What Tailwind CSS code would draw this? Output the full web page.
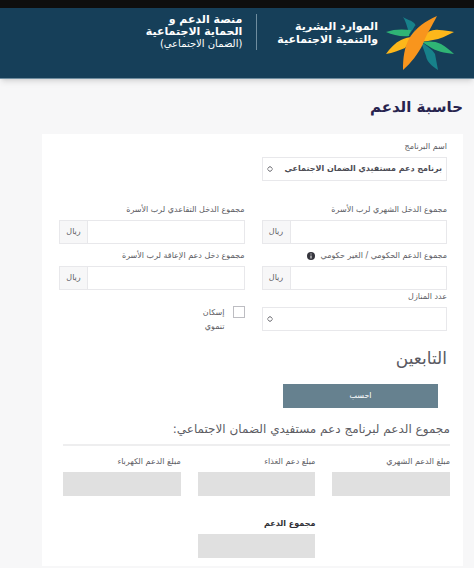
<!DOCTYPE html>
<html lang="ar" dir="rtl">
<head>
<meta charset="utf-8">
<meta name="viewport" content="width=device-width, initial-scale=1">
<title>حاسبة الدعم</title>
<script src="https://cdn.jsdelivr.net/npm/@tailwindcss/browser@4"></script>
</head>
<body class="min-h-screen bg-[#f7f7f8] font-['DejaVu_Sans',sans-serif] text-[8px] leading-3 text-[#5c5c63]">
<header class="border-t-8 border-[#0e0e0e] bg-[#163f59] text-white shadow-md">
  <div class="flex h-[71px] items-start border-b border-[#6f8d9f] pr-5">
    <svg class="mt-2 h-[54px] w-[68px] shrink-0" viewBox="0 0 68 54" aria-label="شعار الوزارة" role="img">
      <path d="M17 1C21 4 26 4 29 8C30 11 30 13 28 17L25 20C21 14 21 7 17 1Z" fill="#17818a"/>
      <path d="M35 26C41 30 46 33 49 38C50 43 51 49 52 54C46 50 41 46 40 40Z" fill="#17818a"/>
      <path d="M0 16C8 13 16 13 25 14L23 20C15 21 7 19 0 16Z" fill="#2fb475"/>
      <path d="M36 26C42 25 50 25 55 28C60 31 64 34 68 38C58 37 50 35 44 31Z" fill="#2fb475"/>
      <path d="M38 20C42 15 47 13 53 14C58 14 63 15 68 16C60 20 54 23 47 24C42 25 38 26 34 25Z" fill="#fdb71a"/>
      <path d="M0 38C4 32 9 27 15 24C19 22 23 21 27 21L19 32C13 34 7 37 0 38Z" fill="#fdb71a"/>
      <path d="M51 0C39 5 30 12 24 21C18 31 17 43 17 54C25 47 32 38 37 28C40 19 46 10 51 0Z" fill="#f8951d"/>
      <path d="M30 10Q28 14 24 19" fill="none" stroke="#163f59" stroke-width="2"/>
    </svg>
    <p class="mr-2 mt-3 text-[11px] leading-[13px] font-bold whitespace-nowrap">الموارد البشرية<br>والتنمية الاجتماعية</p>
    <p class="mt-1.5 mr-5 border-r border-[#6f8d9f] pr-3.5 text-[11px] leading-3 font-bold whitespace-nowrap">منصة الدعم و<br>الحماية الاجتماعية<br><span class="text-[10px] font-normal">(الضمان الاجتماعي)</span></p>
  </div>
</header>
<main class="pr-[11px] pl-[42px]">
  <h1 class="pt-4 pb-3.5 text-[15px] leading-[25px] font-bold text-[#28244f]">حاسبة الدعم</h1>
  <form class="bg-white pt-[7px] pb-2">
    <div class="grid grid-cols-2 gap-x-[17px] pr-4 pl-[17px]">
      <div>
        <label for="program" class="block">اسم البرنامج</label>
        <div class="relative mt-1">
          <select id="program" class="block h-6 w-full appearance-none border border-[#e8e8eb] bg-white pr-1 text-[8px] font-bold text-[#4c4c54]"><option>برنامج دعم مستفيدي الضمان الاجتماعي</option></select>
          <svg class="pointer-events-none absolute top-2 left-1 size-2" viewBox="0 0 8 8" fill="none" stroke="#66666c"><path d="M1.5 3.5L4 1.5L6.5 3.5M1.5 4.5L4 6.5L6.5 4.5"/></svg>
        </div>
      </div>
      <div></div>
      <div class="mt-[23px]">
        <label for="income" class="block whitespace-nowrap">مجموع الدخل الشهري لرب الأسرة</label>
        <div class="mt-1 flex h-6 border border-[#e8e8eb]"><input id="income" class="min-w-0 flex-1"><span class="flex w-7 items-center justify-center border-r border-[#e8e8eb] bg-[#f7f7f8]">ريال</span></div>
      </div>
      <div class="mt-[23px]">
        <label for="pension" class="block whitespace-nowrap">مجموع الدخل التقاعدي لرب الأسرة</label>
        <div class="mt-1 flex h-6 border border-[#e8e8eb]"><input id="pension" class="min-w-0 flex-1"><span class="flex w-7 items-center justify-center border-r border-[#e8e8eb] bg-[#f7f7f8]">ريال</span></div>
      </div>
      <div class="mt-[6px]">
        <label for="support" class="flex items-center gap-1.5 whitespace-nowrap">مجموع الدعم الحكومي / الغير حكومي <svg class="size-2 shrink-0" viewBox="0 0 8 8"><circle cx="4" cy="4" r="4" fill="#35353d"/><path d="M4 1.5V2.5M4 3.5V6.5" stroke="#fff"/></svg></label>
        <div class="mt-1 flex h-6 border border-[#e8e8eb]"><input id="support" class="min-w-0 flex-1"><span class="flex w-7 items-center justify-center border-r border-[#e8e8eb] bg-[#f7f7f8]">ريال</span></div>
      </div>
      <div class="mt-[6px]">
        <label for="disability" class="block whitespace-nowrap">مجموع دخل دعم الإعاقة لرب الأسرة</label>
        <div class="mt-1 flex h-6 border border-[#e8e8eb]"><input id="disability" class="min-w-0 flex-1"><span class="flex w-7 items-center justify-center border-r border-[#e8e8eb] bg-[#f7f7f8]">ريال</span></div>
      </div>
      <div class="mt-px">
        <label for="homes" class="block">عدد المنازل</label>
        <div class="relative mt-1">
          <select id="homes" class="block h-6 w-full appearance-none border border-[#e8e8eb] bg-white"><option></option></select>
          <svg class="pointer-events-none absolute top-2 left-1 size-2" viewBox="0 0 8 8" fill="none" stroke="#66666c"><path d="M1.5 3.5L4 1.5L6.5 3.5M1.5 4.5L4 6.5L6.5 4.5"/></svg>
        </div>
      </div>
      <div class="mt-4 flex items-start gap-2">
        <input id="housing" type="checkbox" class="size-3 shrink-0 appearance-none border border-[#bdbdc2] bg-white">
        <label for="housing" class="w-7 leading-[14px]">إسكان تنموي</label>
      </div>
    </div>
    <h2 class="mt-3 pr-4 text-[17px] leading-6 text-[#5a5a62]">التابعين</h2>
    <button type="button" class="mt-[14px] mr-[25px] block h-6 w-[155px] bg-[#66818f] text-[8px] text-white">احسب</button>
    <section class="pr-[13px] pl-[21px]">
      <h3 class="mt-3 border-b-2 border-[#eeeeef] pb-1.5 text-xs leading-[18px] whitespace-nowrap">مجموع الدعم لبرنامج دعم مستفيدي الضمان الاجتماعي:</h3>
      <div class="mt-2.5 grid grid-cols-3 gap-x-[17px]">
        <div><label for="monthly" class="block">مبلغ الدعم الشهري</label><input id="monthly" readonly class="mt-1 block h-6 w-full bg-[#e0e0e0]"></div>
        <div><label for="food" class="block">مبلغ دعم الغذاء</label><input id="food" readonly class="mt-1 block h-6 w-full bg-[#e0e0e0]"></div>
        <div><label for="power" class="block">مبلغ الدعم الكهرباء</label><input id="power" readonly class="mt-1 block h-6 w-full bg-[#e0e0e0]"></div>
        <div class="col-start-2 mt-[22px]"><label for="total" class="block font-bold text-[#2f2f35]">مجموع الدعم</label><input id="total" readonly class="mt-1 block h-6 w-full bg-[#e0e0e0]"></div>
      </div>
    </section>
  </form>
</main>
</body>
</html>
